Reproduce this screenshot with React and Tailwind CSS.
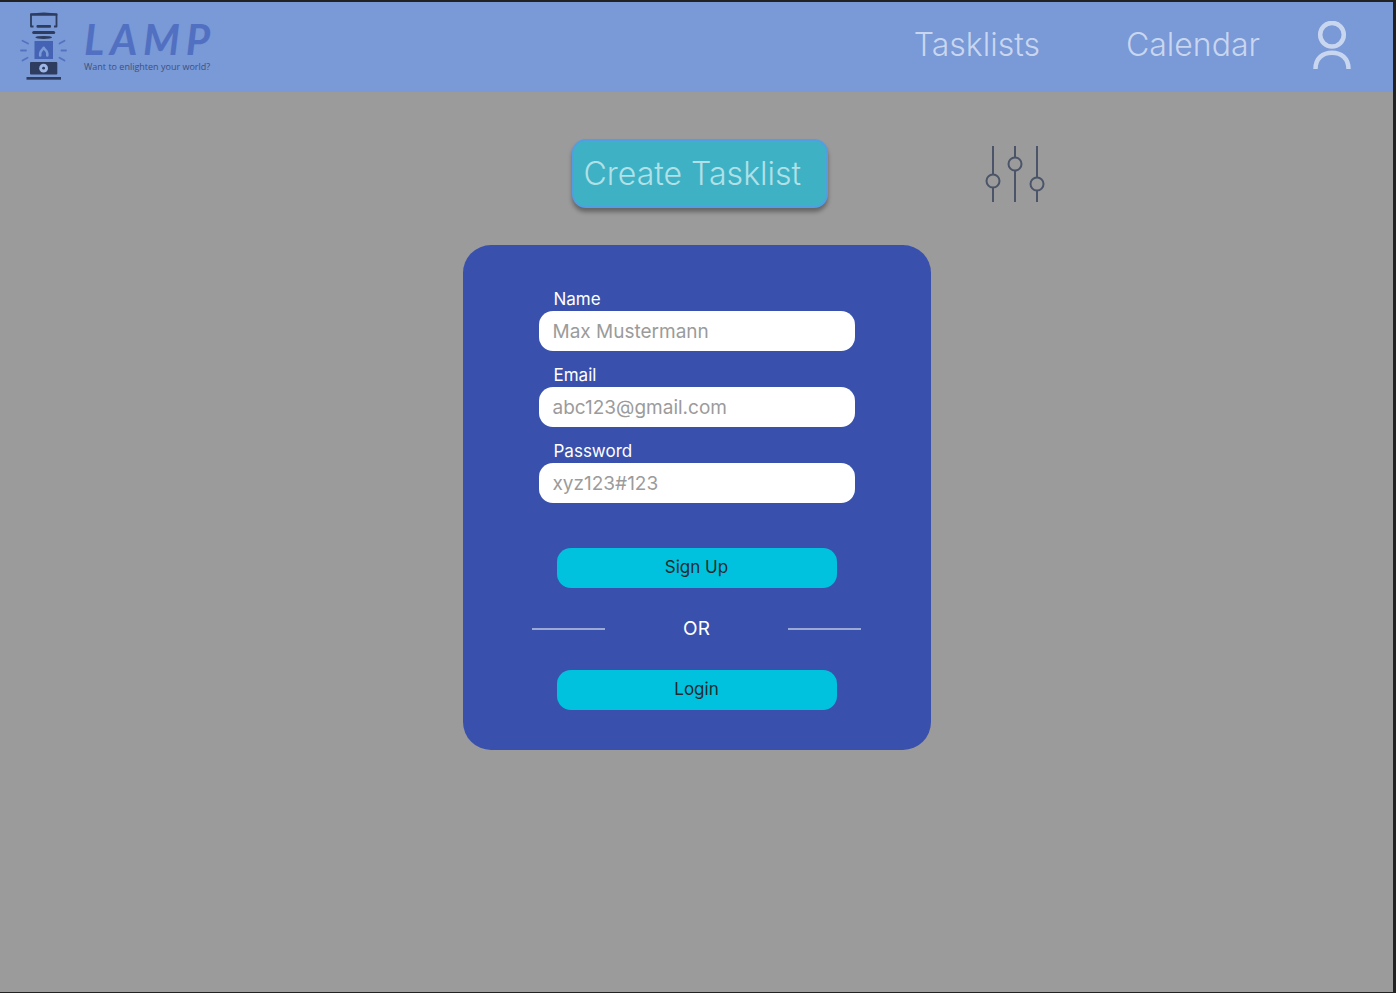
function LampMark() {
  return (
    <svg className="h-[70px] w-12" viewBox="0 0 48 70" fill="none" aria-hidden="true">
      <path d="M13.500 14.500H11V2.500H36.500V14.500H34" stroke="#2e3d5f" strokeWidth="1.800" strokeLinejoin="round" />
      <path d="M10.200 1.500L24 0.500L37.300 1.500V3.500H10.200Z" fill="#2e3d5f" />
      <rect x="16.500" y="13" width="14.500" height="2.800" rx="1" fill="#2e3d5f" />
      <rect x="12.200" y="19" width="23" height="3" rx="1.500" fill="#2e3d5f" />
      <ellipse cx="23.700" cy="25.400" rx="8.300" ry="1.500" fill="#2e3d5f" />
      <rect x="14.500" y="29" width="18.500" height="18" fill="#4563b4" />
      <path d="M20.200 43.500V41.500C20.200 38.500 22.800 38 23.700 35.800C24.600 38 27.300 38.500 27.300 41.500V43.500" stroke="#7999d7" strokeWidth="2.600" strokeLinecap="round" strokeLinejoin="round" />
      <path d="M2.500 28.700L8 31.500M1 38.500H6M2.500 48.500L7.500 45.700M44.500 28.700L39.500 31.500M46 38.500H41.500M44.500 48.500L39.500 45.700" stroke="#5472c0" strokeWidth="1.800" strokeLinecap="round" />
      <rect x="10" y="50" width="27.300" height="12.500" rx="1" fill="#2e3d5f" />
      <circle cx="23.600" cy="56.200" r="4.400" fill="#9db6e6" />
      <circle cx="23.600" cy="56.200" r="1.400" fill="#2e3d5f" />
      <rect x="6.500" y="65" width="34.500" height="2.700" fill="#2e3d5f" />
    </svg>
  );
}

function Logo() {
  return (
    <a href="#home" className="flex items-center gap-4" aria-label="LAMP home">
      <LampMark />
      <span className="flex flex-col">
        <span className="flex justify-between font-['Lato',sans-serif] text-[42px] leading-10 font-bold text-[#5270c1] italic">
          <span>L</span>
          <span>A</span>
          <span>M</span>
          <span>P</span>
        </span>
        <span className="font-['Open_Sans',sans-serif] text-[9px] leading-4 whitespace-nowrap text-[#3f507b]">
          Want to enlighten your world?
        </span>
      </span>
    </a>
  );
}

function UserIcon() {
  return (
    <svg className="h-12 w-[38px]" viewBox="0 0 38 48" fill="none" stroke="#c9d6ef" strokeWidth="4.500" aria-hidden="true">
      <circle cx="19" cy="13.700" r="11.800" />
      <path d="M2.500 48C2.500 37 10 31.700 19 31.700S35.500 37 35.500 48" />
    </svg>
  );
}

function SlidersIcon() {
  return (
    <svg className="h-14 w-[60px]" viewBox="0 0 60 56" fill="none" stroke="#4b5468" strokeWidth="2" aria-hidden="true">
      <path d="M8 0V28M8 42V56M30 0V11M30 25V56M52 0V31M52 45V56" />
      <circle cx="8" cy="35" r="6.500" />
      <circle cx="30" cy="18" r="6.500" />
      <circle cx="52" cy="38" r="6.500" />
    </svg>
  );
}

function Field({ id, label, type, placeholder }) {
  return (
    <div className="flex flex-col">
      <label htmlFor={id} className="pl-[15px] text-[17px] leading-6 text-white">
        {label}
      </label>
      <input
        id={id}
        type={type}
        placeholder={placeholder}
        className="h-10 w-full rounded-[14px] bg-white px-[14px] text-[19px] text-gray-800 outline-none placeholder:text-[#9b9b9b]"
      />
    </div>
  );
}

function ActionButton({ type, children }) {
  return (
    <button type={type} className="h-10 w-[280px] rounded-[14px] bg-[#00c2de] text-[17px] text-[#222b2e]">
      {children}
    </button>
  );
}

export default function App() {
  return (
    <div className="flex min-h-screen flex-col border-t-2 border-r-3 border-b border-[#222222] bg-[#9b9b9b] font-['Inter',sans-serif]">
      <header className="flex h-[90px] items-center justify-between bg-[#7999d7] pr-[42px] pl-5">
        <Logo />
        <nav className="flex items-center pb-1 text-[32px] font-light text-[#c9d6ef]">
          <a href="#tasklists">Tasklists</a>
          <a href="#calendar" className="ml-[86px]">Calendar</a>
          <a href="#account" aria-label="Account" className="ml-[53px]">
            <UserIcon />
          </a>
        </nav>
      </header>

      <main className="flex flex-col items-center">
        <div className="mt-[47px] grid w-full grid-cols-[1fr_256px_1fr] items-center pl-1.5">
          <button
            type="button"
            className="col-start-2 h-[69px] rounded-[14px] border-2 border-[#509fe2] bg-[#3eb2c4] pl-[10px] text-left text-[32px] font-light whitespace-nowrap text-[#b2e0e7] shadow-[0_4px_4px_rgba(0,0,0,0.35)]"
          >
            Create Tasklist
          </button>
          <button type="button" aria-label="Filter" className="ml-[157px] w-[60px]">
            <SlidersIcon />
          </button>
        </div>

        <form className="mt-[37px] flex w-[468px] flex-col items-center rounded-[28px] bg-[#3951ad] pt-[42px] pb-10">
          <div className="flex w-[316px] flex-col gap-3">
            <Field id="name" label="Name" type="text" placeholder="Max Mustermann" />
            <Field id="email" label="Email" type="email" placeholder="abc123@gmail.com" />
            <Field id="password" label="Password" type="password" placeholder="xyz123#123" />
          </div>
          <div className="mt-[45px] flex w-[330px] flex-col items-center gap-[29px]">
            <ActionButton type="submit">Sign Up</ActionButton>
            <div className="flex w-full items-center justify-between text-[19px] leading-6 text-white">
              <span className="h-[2px] w-[73px] bg-[#9ca8d6]" />
              OR
              <span className="h-[2px] w-[73px] bg-[#9ca8d6]" />
            </div>
            <ActionButton type="button">Login</ActionButton>
          </div>
        </form>
      </main>
    </div>
  );
}
